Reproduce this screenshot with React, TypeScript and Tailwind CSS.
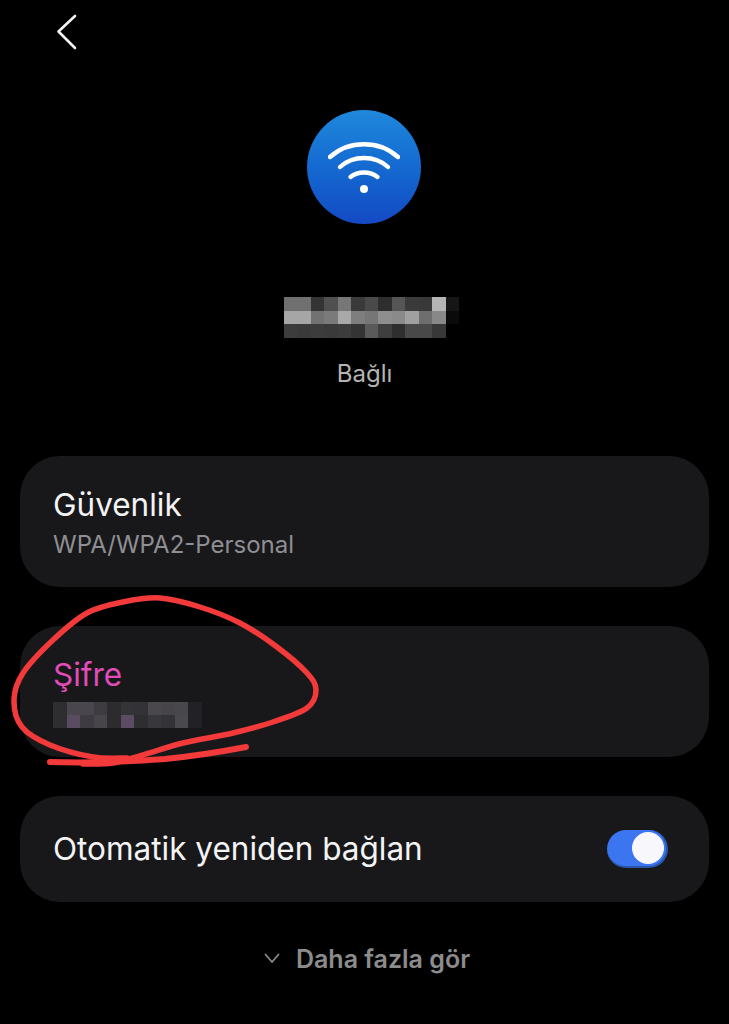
const nameRows = [
  ['#707070', '#707070', '#343434', '#505050', '#777777', '#3a3a3a', '#4a4a4a', '#2e2e2e', '#555555', '#3a3a3a', '#383838', '#b4b4b4', '#161616'],
  ['#a6a6a6', '#a6a6a6', '#727272', '#7a7a7a', '#a8a8a8', '#7e7e7e', '#767676', '#8e8e8e', '#8a8a8a', '#a0a0a0', '#6e6e6e', '#888888', '#0a0a0a'],
  ['#3c3c3c', '#3a3a3a', '#3c3c3c', '#3a3a3a', '#3c3c3c', '#343434', '#5a5a5a', '#3e3e3e', '#2e2e2e', '#484848', '#484848', '#383838', '#000000'],
];

const passRows = [
  ['#2e2d30', '#4a464e', '#4a464e', '#3e3c40', '#2c2b2e', '#343336', '#333236', '#4a484c', '#47454a', '#48474b', '#222125'],
  ['#2e2d30', '#5a4c60', '#3e3b42', '#47444a', '#2c2b2e', '#5c4c62', '#2e2d30', '#38373b', '#333236', '#4a494d', '#222125'],
];

// red marker scribble, traced from the picture
const loopPoints = [
  [127, 758], [93, 757], [50, 745], [22, 727], [14, 700], [23, 673], [53, 640], [87, 613], [123, 602],
  [160, 598], [200, 607], [240, 623], [277, 647], [307, 673], [316, 690], [307, 708], [273, 722],
  [233, 733], [183, 743], [143, 755], [113, 763], [83, 764],
];

function smooth(points: number[][]) {
  let d = `M${points[0][0]} ${points[0][1]}`;
  for (let i = 0; i < points.length - 1; i++) {
    const p0 = points[Math.max(i - 1, 0)];
    const p1 = points[i];
    const p2 = points[i + 1];
    const p3 = points[Math.min(i + 2, points.length - 1)];
    const c1x = p1[0] + (p2[0] - p0[0]) / 6;
    const c1y = p1[1] + (p2[1] - p0[1]) / 6;
    const c2x = p2[0] - (p3[0] - p1[0]) / 6;
    const c2y = p2[1] - (p3[1] - p1[1]) / 6;
    d += ` C${c1x} ${c1y} ${c2x} ${c2y} ${p2[0]} ${p2[1]}`;
  }
  return d;
}

function Mosaic({ rows, cellH }: { rows: string[][]; cellH: string }) {
  return (
    <div className="flex flex-col">
      {rows.map((row, r) => (
        <div key={r} className="flex">
          {row.map((c, i) => (
            <div key={i} className={`w-[13.5px] ${cellH}`} style={{ backgroundColor: c }} />
          ))}
        </div>
      ))}
    </div>
  );
}

export default function App() {
  return (
    <div className="relative w-[729px] h-[1024px] overflow-hidden bg-black font-['Inter',sans-serif] text-white">
      <div className="h-[110px] pl-[56px] pt-[14px]">
        <svg width="22" height="36" viewBox="0 0 22 36" fill="none" stroke="#f2f2f2" strokeWidth="2.6" strokeLinecap="round" strokeLinejoin="round">
          <path d="M19 2 L2.5 17.5 L19 34" />
        </svg>
      </div>

      <div className="flex flex-col items-center">
        <div className="w-[114px] h-[114px] mr-[1px] rounded-full bg-gradient-to-b from-[#1f88dc] to-[#1449c4] flex items-center justify-center">
          <svg width="72" height="56" viewBox="0 0 72 56" fill="none" stroke="#fff" strokeWidth="4.4" strokeLinecap="round">
            <path d="M2 18 C21 1 51 1 70 18" />
            <path d="M12 28 C25 16 47 16 60 28" />
            <path d="M22.5 38 C30 32 42 32 49.5 38" />
            <circle cx="36" cy="50" r="4" fill="#fff" stroke="none" />
          </svg>
        </div>
        <div className="mt-[73px] ml-[14px]">
          <Mosaic rows={nameRows} cellH="h-[13.5px]" />
        </div>
        <div className="mt-[18px] text-[24px] leading-[36px] text-[#b4b4b4]">Bağlı</div>
      </div>

      <div className="mt-[64px] mx-[20px] flex flex-col gap-[39px]">
        <div className="h-[131px] rounded-[40px] bg-[#18181b] pl-[33px] pt-[30px]">
          <div className="text-[31.5px] leading-[38px] text-[#f4f4f4]">Güvenlik</div>
          <div className="mt-[6px] text-[24px] leading-[30px] text-[#8f8f93]">WPA/WPA2-Personal</div>
        </div>
        <div className="h-[131px] rounded-[40px] bg-[#18181b] pl-[33px] pt-[30px]">
          <div className="text-[31.5px] leading-[38px] text-[#e04cb8]">Şifre</div>
          <div className="mt-[8px]">
            <Mosaic rows={passRows} cellH="h-[13px]" />
          </div>
        </div>
        <div className="h-[106px] rounded-[40px] bg-[#18181b] pl-[33px] pr-[41px] flex items-center justify-between">
          <div className="text-[31.5px] leading-[38px] text-[#f4f4f4]">Otomatik yeniden bağlan</div>
          <div className="w-[61px] h-[38px] rounded-full bg-[#3b76f0] border-r-2 border-b-2 border-[#2a55a8] flex items-center justify-end pr-[2px]">
            <div className="w-[32px] h-[32px] rounded-full bg-[#f8f8fc]" />
          </div>
        </div>
      </div>

      <div className="mt-[38px] flex items-center justify-center gap-[16px] pl-[5px]">
        <svg width="16" height="11" viewBox="0 0 16 11" fill="none" stroke="#8a8a8a" strokeWidth="1.8" strokeLinecap="round" strokeLinejoin="round">
          <path d="M1.5 1.5 L8 9 L14.5 1.5" />
        </svg>
        <span className="text-[25px] leading-[38px] font-semibold text-[#8c8c8c]">Daha fazla gör</span>
      </div>

      <svg className="absolute inset-0 pointer-events-none" width="729" height="1024" viewBox="0 0 729 1024" fill="none" stroke="#f23a3a" strokeWidth="5.5" strokeLinecap="round" strokeLinejoin="round">
        <path d={smooth(loopPoints)} />
        <path d="M50 762 C85 763 125 762 165 759 C195 756 220 752 246 747" strokeWidth="6" />
      </svg>
    </div>
  );
}
